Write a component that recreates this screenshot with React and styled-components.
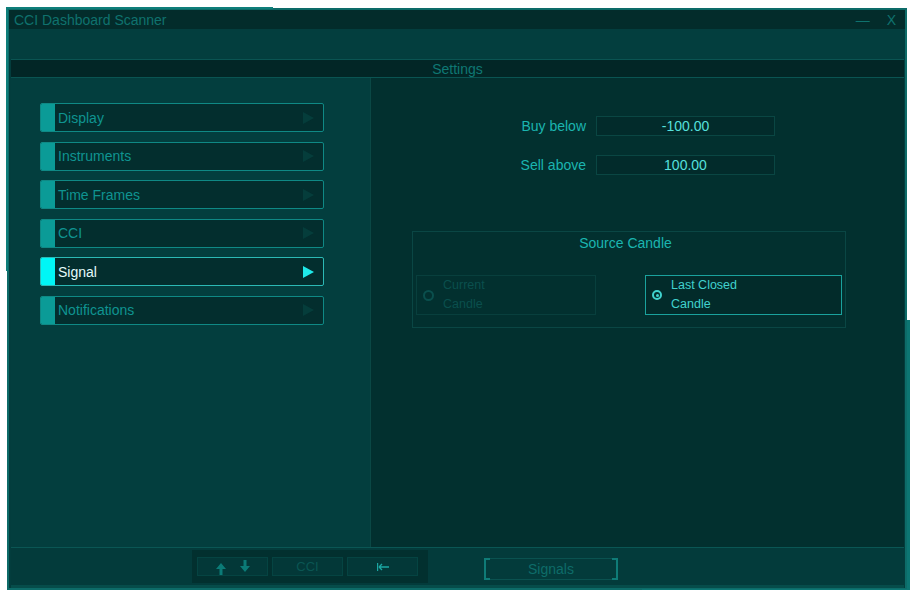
import React from 'react';
import styled, { createGlobalStyle } from 'styled-components';

const Global = createGlobalStyle`
	html, body {
		margin: 0;
		padding: 0;
		background: #ffffff;
	}
	body {
		font-family: 'Liberation Sans', Arial, sans-serif;
	}
`;

const Window = styled.div`
	position: relative;
	box-sizing: border-box;
	margin: 8px 0 0 7px;
	width: 900px;
	height: 582px;
	border: 2px solid #0d6b68;
	background: #033d3d;
	display: flex;
	flex-direction: column;

	/* the frame pieces that are a few pixels off */
	&::before {
		content: '';
		position: absolute;
		left: -3px;
		top: -3px;
		width: 265px;
		height: 262px;
		border-top: 2px solid #0e7e7a;
		border-left: 2px solid #0e7e7a;
		pointer-events: none;
	}
	&::after {
		content: '';
		position: absolute;
		left: 633px;
		top: 310px;
		right: -5px;
		bottom: -4px;
		border-right: 3px solid #0c7673;
		border-bottom: 3px solid #0c7673;
		pointer-events: none;
	}
`;

const TitleBar = styled.div`
	height: 19px;
	flex: none;
	background: #032c2b;
	display: flex;
	align-items: center;
	justify-content: space-between;
	padding: 1px 9px 0 5px;
	box-sizing: border-box;
	color: #0f726e;
	font-size: 14px;
`;

const Controls = styled.div`
	display: flex;
	align-items: center;
	gap: 17px;
	font-size: 14px;
`;

const Band = styled.div`
	height: 30px;
	flex: none;
	background: #033e3e;
`;

const Header = styled.div`
	box-sizing: border-box;
	height: 19px;
	flex: none;
	margin: 0 1px 0 2px;
	background: #022626;
	border-top: 1px solid #0a5452;
	border-bottom: 1px solid #0a5452;
	color: #0f7874;
	font-size: 14px;
	line-height: 19px;
	text-align: center;
`;

const Body = styled.div`
	flex: 1;
	display: flex;
	margin: 0 1px 0 2px;
	min-height: 0;
`;

const LeftPanel = styled.div`
	width: 359px;
	flex: none;
	background: #033e3e;
	padding: 25px 0 0 29px;
	box-sizing: border-box;
	display: flex;
	flex-direction: column;
	gap: 9.6px;
`;

const NavButton = styled.div`
	box-sizing: border-box;
	width: 284px;
	height: 29px;
	display: flex;
	align-items: center;
	background: #032e2e;
	border: 1px solid ${(p) => (p.active ? '#2cb9b5' : '#0f8985')};
	border-radius: 2px;
	overflow: hidden;
	font-size: 14px;
	color: ${(p) => (p.active ? '#e4fbfb' : '#0f9491')};
`;

const Accent = styled.div`
	width: 14px;
	align-self: stretch;
	background: ${(p) => (p.active ? '#00f6f6' : '#0b9b97')};
	margin-right: 3px;
`;

const NavLabel = styled.span`
	flex: 1;
`;

const NavArrow = styled.svg`
	width: 11px;
	height: 12px;
	margin-right: 9px;
	fill: ${(p) => (p.active ? '#1fe9e9' : '#053d3b')};
`;

const RightPanel = styled.div`
	flex: 1;
	background: #02302f;
	border-left: 1px solid #0a4845;
	padding-top: 38px;
	box-sizing: border-box;
`;

const Form = styled.div`
	display: grid;
	grid-template-columns: 215px 179px;
	column-gap: 10px;
	row-gap: 19px;
`;

const Label = styled.div`
	text-align: right;
	font-size: 14px;
	color: #1bb5b0;
	line-height: 20px;
`;

const Field = styled.div`
	box-sizing: border-box;
	height: 20px;
	background: #022b2b;
	border: 1px solid #0a4643;
	text-align: center;
	font-size: 14px;
	line-height: 18px;
	color: #55e0dc;
`;

const Group = styled.div`
	box-sizing: border-box;
	margin: 56px 0 0 41px;
	width: 434px;
	height: 97px;
	border: 1px solid #0a4644;
	padding: 0 3px;
`;

const GroupTitle = styled.div`
	height: 22px;
	line-height: 22px;
	text-align: center;
	padding-right: 7px;
	font-size: 14px;
	color: #1bb5b0;
	margin-bottom: 21px;
`;

const Options = styled.div`
	display: flex;
	justify-content: space-between;
`;

const Option = styled.div`
	box-sizing: border-box;
	width: ${(p) => p.width}px;
	height: 40px;
	display: flex;
	align-items: center;
	border: 1px solid ${(p) => (p.checked ? '#1aa29d' : p.disabled ? '#083f3d' : '#0a4644')};
	background: ${(p) => (p.checked ? '#022b2a' : 'transparent')};
	font-size: 12.5px;
	line-height: 19px;
	color: ${(p) => (p.checked ? '#40d2ce' : p.disabled ? '#0a4f4d' : '#1bb5b0')};
`;

const Circle = styled.span`
	box-sizing: border-box;
	width: ${(p) => (p.checked ? 10 : 11)}px;
	height: ${(p) => (p.checked ? 10 : 11)}px;
	border-radius: 50%;
	margin: 0 ${(p) => (p.checked ? 9 : 9)}px 0 ${(p) => (p.checked ? 6 : 6)}px;
	border: 2px solid ${(p) => (p.checked ? '#40d2ce' : '#0a4f4d')};
	display: flex;
	align-items: center;
	justify-content: center;
	flex: none;

	&::after {
		content: '';
		width: 3px;
		height: 3px;
		border-radius: 50%;
		background: ${(p) => (p.checked ? '#40d2ce' : 'transparent')};
	}
`;

const BottomBar = styled.div`
	box-sizing: border-box;
	height: 41px;
	flex: none;
	margin: 0 1px 0 2px;
	border-top: 1px solid #0a5654;
	border-bottom: 3px solid #064c4a;
	background: #033b3b;
	display: flex;
	align-items: flex-start;
	padding: 2px 0 0 181px;
`;

const ButtonGroup = styled.div`
	box-sizing: border-box;
	width: 236px;
	height: 33px;
	background: #02302f;
	display: flex;
	align-items: center;
	gap: 4px;
	padding-left: 5px;
`;

const ToolButton = styled.div`
	box-sizing: border-box;
	width: 71px;
	height: 19px;
	border: 1px solid #054442;
	background: #033838;
	display: flex;
	align-items: center;
	justify-content: center;
	gap: 14px;
	font-size: 13px;
	color: #0a5653;
`;

const SignalsBox = styled.div`
	position: relative;
	box-sizing: border-box;
	margin: 8px 0 0 56px;
	width: 134px;
	height: 22px;
	border-top: 1px solid #0a5250;
	border-bottom: 1px solid #0a5250;
	text-align: center;
	font-size: 14px;
	line-height: 21px;
	color: #0e6c69;

	&::before,
	&::after {
		content: '';
		position: absolute;
		top: -1px;
		bottom: -1px;
		width: 4px;
		border: 2px solid #0f7b77;
	}
	&::before {
		left: 0;
		border-right: none;
	}
	&::after {
		right: 0;
		border-left: none;
	}
`;

const ArrowIcon = ({ down, offset }) => (
	<svg width="10" height="12" viewBox="0 0 10 12" style={{ marginTop: offset }}>
		<path
			d={down ? 'M3.5 0h3v6h3.5L5 12 0 6h3.5z' : 'M5 0l5 6H6.5v6h-3V6H0z'}
			fill="#0b7b77"
		/>
	</svg>
);

const BackTabIcon = () => (
	<svg width="12" height="8" viewBox="0 0 12 8">
		<path d="M0.5 0v8" stroke="#1ba6a2" strokeWidth="1.4" />
		<path d="M2 4h10M2 4l3-3M2 4l3 3" stroke="#1ba6a2" strokeWidth="1.4" fill="none" />
	</svg>
);

const navItems = ['Display', 'Instruments', 'Time Frames', 'CCI', 'Signal', 'Notifications'];

const App = () => (
	<>
		<Global />
		<Window>
			<TitleBar>
				<span>CCI Dashboard Scanner</span>
				<Controls>
					<span>—</span>
					<span>X</span>
				</Controls>
			</TitleBar>
			<Band />
			<Header>Settings</Header>
			<Body>
				<LeftPanel>
					{navItems.map((item) => {
						const active = item === 'Signal';
						return (
							<NavButton key={item} active={active}>
								<Accent active={active} />
								<NavLabel>{item}</NavLabel>
								<NavArrow viewBox="0 0 11 12" active={active}>
									<path d="M0 0l11 6-11 6z" />
								</NavArrow>
							</NavButton>
						);
					})}
				</LeftPanel>
				<RightPanel>
					<Form>
						<Label>Buy below</Label>
						<Field>-100.00</Field>
						<Label>Sell above</Label>
						<Field>100.00</Field>
					</Form>
					<Group>
						<GroupTitle>Source Candle</GroupTitle>
						<Options>
							<Option width={180} disabled>
								<Circle />
								<div>
									Current
									<br />
									Candle
								</div>
							</Option>
							<Option width={197} checked>
								<Circle checked />
								<div>
									Last Closed
									<br />
									Candle
								</div>
							</Option>
						</Options>
					</Group>
				</RightPanel>
			</Body>
			<BottomBar>
				<ButtonGroup>
					<ToolButton>
						<ArrowIcon offset="4px" />
						<ArrowIcon down offset="-2px" />
					</ToolButton>
					<ToolButton>CCI</ToolButton>
					<ToolButton>
						<BackTabIcon />
					</ToolButton>
				</ButtonGroup>
				<SignalsBox>Signals</SignalsBox>
			</BottomBar>
		</Window>
	</>
);

export default App;
